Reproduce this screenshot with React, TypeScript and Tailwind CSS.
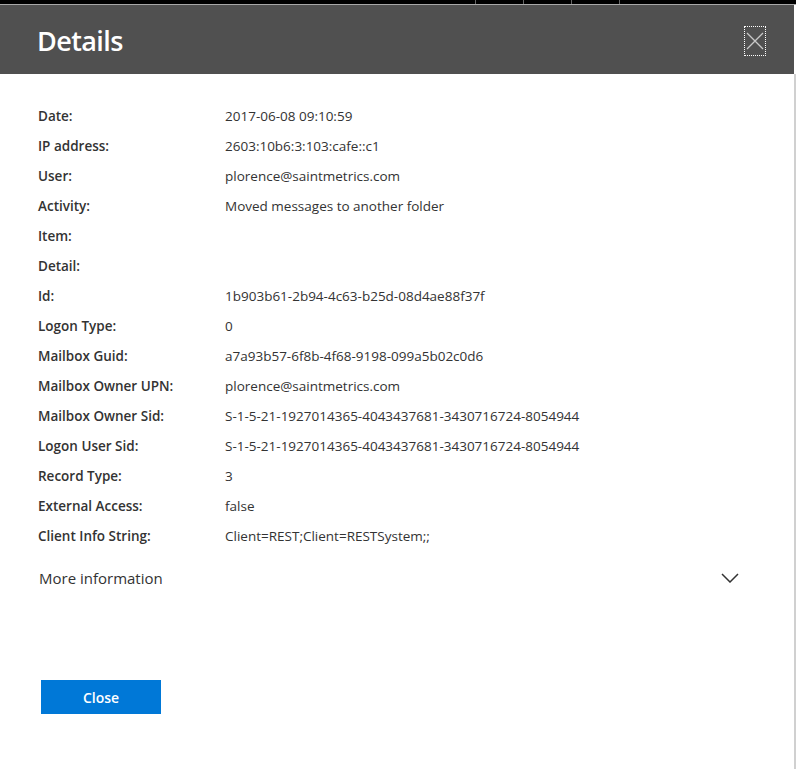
const rows: [string, string][] = [
  ['Date:', '2017-06-08 09:10:59'],
  ['IP address:', '2603:10b6:3:103:cafe::c1'],
  ['User:', 'plorence@saintmetrics.com'],
  ['Activity:', 'Moved messages to another folder'],
  ['Item:', ''],
  ['Detail:', ''],
  ['Id:', '1b903b61-2b94-4c63-b25d-08d4ae88f37f'],
  ['Logon Type:', '0'],
  ['Mailbox Guid:', 'a7a93b57-6f8b-4f68-9198-099a5b02c0d6'],
  ['Mailbox Owner UPN:', 'plorence@saintmetrics.com'],
  ['Mailbox Owner Sid:', 'S-1-5-21-1927014365-4043437681-3430716724-8054944'],
  ['Logon User Sid:', 'S-1-5-21-1927014365-4043437681-3430716724-8054944'],
  ['Record Type:', '3'],
  ['External Access:', 'false'],
  ['Client Info String:', 'Client=REST;Client=RESTSystem;;'],
];

export default function App() {
  return (
    <div className="w-[796px] h-[769px] bg-white flex flex-col overflow-hidden font-['Open_Sans',sans-serif] text-[#333]">
      {/* strip of the page behind the panel */}
      <div className="h-[4px] bg-black flex">
        <div className="w-[475px]" />
        <div className="w-[48px] border-l border-[#666]" />
        <div className="w-[48px] border-l border-[#666]" />
        <div className="w-[48px] border-l border-[#666]" />
        <div className="w-[48px] border-l border-[#666]" />
      </div>
      <div className="h-px bg-[#a8a8a8]" />

      <div className="flex flex-1">
        <div className="w-[794px] flex flex-col">
          <header className="h-[69px] bg-[#505050] flex items-center justify-between pl-[37px] pr-[28px]">
            <h1 className="mt-[4px] text-[27px] font-semibold text-white tracking-[-0.6px]">Details</h1>
            <button className="mt-[2px] w-[22px] h-[30px] border border-dotted border-white flex items-center justify-center">
              <svg width="18" height="18" viewBox="0 0 18 18" fill="none" stroke="#c8c8c8" strokeWidth="1.3">
                <path d="M1 1L17 17M17 1L1 17" />
              </svg>
            </button>
          </header>

          <div className="flex-1 pt-[27px] pl-[38px] pr-[55px]">
            <dl>
              {rows.map(([label, value]) => (
                <div key={label} className="flex h-[30px] items-center text-[13.5px]">
                  <dt className="w-[187px] font-semibold">{label}</dt>
                  <dd>{value}</dd>
                </div>
              ))}
            </dl>

            <div className="mt-[15px] flex items-center justify-between h-[24px] pl-px">
              <span className="text-[15px]">More information</span>
              <svg width="18" height="10" viewBox="0 0 18 10" fill="none" stroke="#333" strokeWidth="1.5">
                <path d="M1 1L9 9L17 1" />
              </svg>
            </div>

            <button className="mt-[90px] ml-[3px] w-[120px] h-[34px] bg-[#0078d7] text-white text-[14px] font-semibold">
              Close
            </button>
          </div>
        </div>
        <div className="w-[2px] flex flex-col">
          <div className="h-[69px] bg-white" />
          <div className="flex-1 bg-[#d0d0d0]" />
        </div>
      </div>
    </div>
  );
}
